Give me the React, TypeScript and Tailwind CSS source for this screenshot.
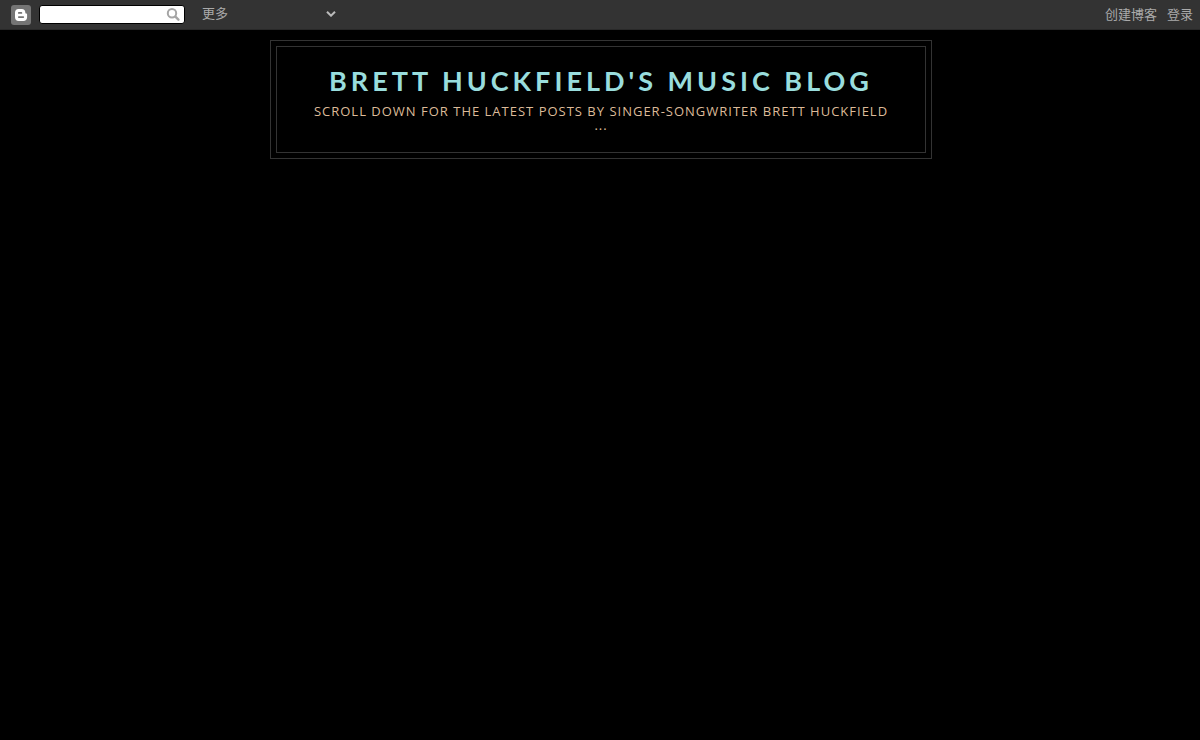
function BloggerLogo() {
  return (
    <svg viewBox="0 0 20 20" className="size-5" aria-hidden="true">
      <rect width="20" height="20" rx="3" fill="#757575" />
      <path
        fill="#fff"
        fillRule="evenodd"
        d="M7.400 4h3.400C13 4 14.300 5.300 14.300 7.200c0 1 .3 1.400 1 1.400.5 0 .8.300.8.900v2.800c0 2.200-1.500 3.700-3.700 3.700H7.600C5.400 16 4 14.500 4 12.300V7.600C4 5.500 5.300 4 7.400 4zM7.800 7.100a.85.85 0 0 0 0 1.700h2.600a.85.85 0 0 0 0-1.700zM7.800 11.200a.85.85 0 0 0 0 1.700h4.500a.85.85 0 0 0 0-1.700z"
      />
    </svg>
  );
}

function SearchIcon() {
  return (
    <svg viewBox="0 0 14 14" className="size-3.5" fill="none" stroke="#a5a5a5" aria-hidden="true">
      <circle cx="6" cy="5.200" r="4.200" strokeWidth="2" />
      <path d="M9.400 8.700l3 3" strokeWidth="2.400" strokeLinecap="round" />
    </svg>
  );
}

function Navbar() {
  return (
    <nav className="flex h-[30px] items-center border-b border-[#292929] bg-[#333] pr-[7px] pl-[11px] text-[13px] text-[#aaa]">
      <a href="#" aria-label="Blogger">
        <BloggerLogo />
      </a>
      <form
        className="ml-2 flex h-[19px] w-[146px] items-center rounded-[3px] border border-black bg-white pr-1"
        onSubmit={(e) => e.preventDefault()}
      >
        <input
          type="text"
          aria-label="搜索"
          className="h-full min-w-0 flex-1 bg-transparent px-1 text-xs text-black outline-none"
        />
        <button type="submit" aria-label="搜索">
          <SearchIcon />
        </button>
      </form>
      <div className="ml-[17px] grid w-[134px] items-center pb-0.5">
        <select
          aria-label="更多"
          className="col-start-1 row-start-1 w-full appearance-none bg-transparent leading-5 outline-none"
        >
          <option>更多</option>
        </select>
        <svg
          viewBox="0 0 10 6"
          className="pointer-events-none col-start-1 row-start-1 h-1.5 w-2.5 justify-self-end"
          fill="none"
          stroke="#bbb"
          strokeWidth="2"
          aria-hidden="true"
        >
          <path d="M1 .7l4 4 4-4" />
        </svg>
      </div>
      <div className="ml-auto flex gap-2.5">
        <a href="#">创建博客</a>
        <a href="#">登录</a>
      </div>
    </nav>
  );
}

export default function App() {
  return (
    <div className="min-h-screen bg-black font-['Liberation_Sans','Noto_Sans_CJK_SC',sans-serif]">
      <Navbar />
      <main className="pt-2.5 pl-0.5">
        <header className="mx-auto max-w-[662px] border border-[#333] p-[5px] text-center uppercase">
          <div className="border border-[#333] px-8 pt-[18px] pb-5">
            <h1 className="font-[Lato,sans-serif] text-[27px] leading-8 font-bold tracking-[4px] text-[#99dddd]">
              <a href="#">Brett Huckfield's Music Blog</a>
            </h1>
            <p className="mt-[7px] font-['Open_Sans',sans-serif] text-[13px] leading-[14px] font-medium tracking-[1px] text-[#ddbb99]">
              Scroll down for the latest posts by singer-songwriter Brett Huckfield ...
            </p>
          </div>
        </header>
      </main>
    </div>
  );
}
